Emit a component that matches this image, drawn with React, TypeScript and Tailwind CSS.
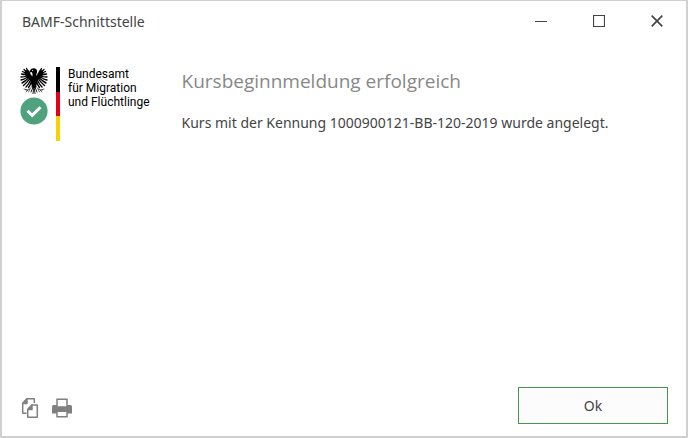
import type { ReactNode } from 'react';

function Eagle() {
  return (
    <svg viewBox="0 0 56 54" className="h-[27px] w-[28px]" role="img" aria-label="Bundesadler">
      {/* wings: every feather is its own stroke, right side mirrored */}
      {['', 'translate(56 0) scale(-1 1)'].map((transform) => (
        <g key={transform} transform={transform} stroke="#000" strokeLinecap="round" fill="none">
          <path d="M26 21C22 18 20 12 16 6C12 5 9 9 10 14C12 19 17 24 25 30Z" fill="#000" strokeWidth="1" />
          <path d="M16 8L13 3M13 10L8 5M11 12L5 9" strokeWidth="2.6" />
          <path d="M12 15C9 15 6 15 3 14" strokeWidth="2.8" />
          <path d="M13 18C10 20 6 20 2 20" strokeWidth="2.8" />
          <path d="M15 20C11 23 8 25 2 26" strokeWidth="2.8" />
          <path d="M17 22C13 26 10 29 4 32" strokeWidth="2.8" />
          <path d="M20 23C16 28 13 32 7 37" strokeWidth="2.8" />
          <path d="M22 25C19 31 16 36 12 40" strokeWidth="2.8" />
          <path d="M24 27C22 33 20 37 17 41" strokeWidth="2.6" />
          <path d="M25 37C22 43 18 46 11 46M16 46L12 50M20 44L17 50M14 46L8 44" strokeWidth="1.2" />
          <path d="M27 38L22 50M28 38L26 53" strokeWidth="1.8" />
        </g>
      ))}
      <path d="M24 20C26 15 25 12 23 10L17 12L20 7C23 1 32 1 34 7C35 12 31 15 33 20L35 30L31 42H25L21 30Z" />
      <circle cx="25" cy="7" r="1.2" fill="#fff" />
    </svg>
  );
}

function AgencyLogo() {
  return (
    <div className="flex shrink-0 gap-2">
      <div className="flex w-7 flex-col items-center gap-[3px]">
        <Eagle />
        <svg viewBox="0 0 28 28" className="size-7" role="img" aria-label="Erfolgreich">
          <circle cx="14" cy="14" r="13.6" fill="#4fa27e" />
          <path d="M7.5 13.8L12.2 18.4L20.5 10.2" fill="none" stroke="#fff" strokeWidth="3" />
        </svg>
      </div>
      <div className="flex h-[74px] w-1 flex-col">
        <span className="flex-1 bg-black" />
        <span className="flex-1 bg-[#e2001a]" />
        <span className="flex-1 bg-[#f9d000]" />
      </div>
      <p className="font-['Roboto',sans-serif] text-[12px] leading-[14px] whitespace-nowrap text-black">
        Bundesamt
        <br />
        für Migration
        <br />
        und Flüchtlinge
      </p>
    </div>
  );
}

function CaptionButton({ label, children }: { label: string; children: ReactNode }) {
  return (
    <button type="button" aria-label={label} className="flex h-10 w-[58px] items-center justify-center hover:bg-gray-100">
      <svg viewBox="0 0 12 12" className="size-3" fill="none" stroke="#444">
        {children}
      </svg>
    </button>
  );
}

function TitleBar() {
  return (
    <header className="flex items-center justify-between pl-5">
      <h1 className="pt-px text-[14px] leading-5">BAMF-Schnittstelle</h1>
      <div className="flex">
        <CaptionButton label="Minimieren">
          <path d="M0 6.5H12" />
        </CaptionButton>
        <CaptionButton label="Maximieren">
          <path d="M.5 .5H11.5V11.5H.5Z" strokeWidth="1.2" />
        </CaptionButton>
        <CaptionButton label="Schließen">
          <path d="M.7 .7L11.3 11.3M11.3 .7L.7 11.3" strokeWidth="1.7" />
        </CaptionButton>
      </div>
    </header>
  );
}

export default function App() {
  return (
    <div className="flex min-h-screen flex-col border-2 border-t border-[#d0d0d0] bg-white font-['Noto_Sans','Open_Sans',sans-serif] text-[#444]">
      <TitleBar />

      <main className="flex flex-1 items-start gap-8 px-[18px] pt-[26px]">
        <AgencyLogo />
        <div className="flex min-w-0 flex-col gap-[18px]">
          <h2 className="font-['Open_Sans',sans-serif] text-[19px] leading-7 text-[#888]">Kursbeginnmeldung erfolgreich</h2>
          <p className="text-[14px] leading-5">Kurs mit der Kennung 1000900121-BB-120-2019 wurde angelegt.</p>
        </div>
      </main>

      <footer className="flex items-center justify-between px-[18px] pb-3">
        <div className="flex items-center gap-3 pt-1">
          <button type="button" aria-label="Kopieren">
            <svg viewBox="0 0 20 20" className="size-5" fill="none" stroke="#808080" strokeWidth="1.5" strokeLinejoin="round">
              <path d="M6.5 15.3H2.7V5.5L7 .8H14.3V5" />
              <path d="M2.7 5.5H7V.8Z" fill="#808080" />
              <path d="M7.7 11.5L12 7H17.3V19.2H7.7Z" fill="#fff" />
              <path d="M7.7 11.5H12V7Z" fill="#808080" />
            </svg>
          </button>
          <button type="button" aria-label="Drucken">
            <svg viewBox="0 0 20 20" className="size-5">
              <path d="M0 8.5Q0 7 1.5 7H18.5Q20 7 20 8.5V15.5H0Z" fill="#808080" />
              <path d="M5 1.3H15V9H5ZM5 13.3H15V18.7H5Z" fill="#fff" stroke="#808080" strokeWidth="1.5" />
            </svg>
          </button>
        </div>
        <button type="button" className="h-[37px] w-[150px] border border-[#45984b] bg-[#fcfcfc] text-[14px] hover:bg-gray-100">
          Ok
        </button>
      </footer>
    </div>
  );
}
